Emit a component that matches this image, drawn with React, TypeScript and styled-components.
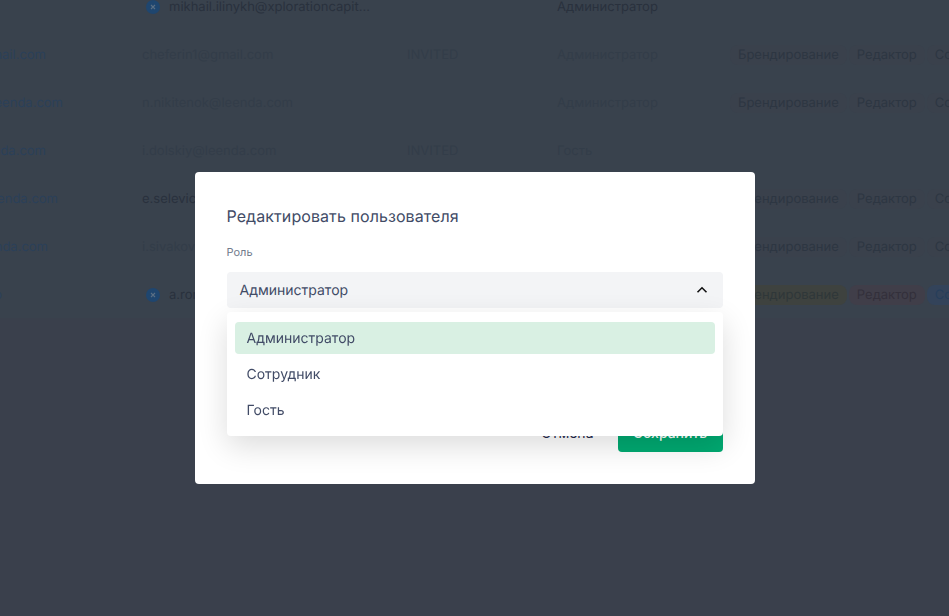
import React from "react";
import styled, { createGlobalStyle } from "styled-components";

type Tone = "dark" | "faint" | "link";

const users: {
  login: string;
  loginEnd: number;
  email: string;
  tone: Tone;
  badge?: boolean;
  status?: string;
  role: string;
  roleTone: Tone;
  tags?: boolean;
  bright?: boolean;
}[] = [
  { login: "", loginEnd: 0, email: "mikhail.ilinykh@xplorationcapit...", tone: "dark", badge: true, role: "Администратор", roleTone: "dark" },
  { login: "cheferin1@gmail.com", loginEnd: 46, email: "cheferin1@gmail.com", tone: "faint", status: "INVITED", role: "Администратор", roleTone: "faint", tags: true },
  { login: "n.nikitenok@leenda.com", loginEnd: 63, email: "n.nikitenok@leenda.com", tone: "faint", role: "Администратор", roleTone: "faint", tags: true },
  { login: "i.dolskiy@leenda.com", loginEnd: 46, email: "i.dolskiy@leenda.com", tone: "faint", status: "INVITED", role: "Гость", roleTone: "faint" },
  { login: "e.selevich@leenda.com", loginEnd: 58, email: "e.selevich@leenda.com", tone: "dark", role: "Администратор", roleTone: "faint", tags: true },
  { login: "i.sivakov@leenda.com", loginEnd: 48, email: "i.sivakov@leenda.com", tone: "faint", role: "Администратор", roleTone: "faint", tags: true },
  { login: "a.romanenko", loginEnd: 2, email: "a.romanenko@leenda.com", tone: "dark", badge: true, role: "Администратор", roleTone: "dark", tags: true, bright: true },
];

const toneColor: Record<Tone, string> = {
  dark: "#29313d",
  faint: "#333d49",
  link: "#2b4059",
};

const options = ["Администратор", "Сотрудник", "Гость"];

export default function App() {
  return (
    <Page>
      <GlobalStyle />
      <Table>
        {users.map((user) => (
          <Row key={user.email}>
            <Login $end={user.loginEnd}>
              <span>{user.login}</span>
            </Login>
            <EmailCell $tone={user.tone} $badge={user.badge}>
              {user.badge && (
                <Badge>
                  <svg width="6" height="6" viewBox="0 0 6 6">
                    <path d="M1 1l4 4M5 1L1 5" stroke="#5a6f84" strokeWidth="1.1" />
                  </svg>
                </Badge>
              )}
              {user.email}
            </EmailCell>
            <Cell $tone="faint">{user.status}</Cell>
            <Cell $tone={user.roleTone}>{user.role}</Cell>
            {user.tags && (
              <Tags>
                <Tag $bg={user.bright ? "#3e423f" : "#3a414c"} $color={user.bright ? "#2f3739" : "#2d3642"}>
                  Брендирование
                </Tag>
                <Tag $bg={user.bright ? "#403e49" : "#3a414c"} $color={user.bright ? "#33303b" : "#2d3642"}>
                  Редактор
                </Tag>
                <Tag $bg={user.bright ? "#33435a" : "#3a414c"} $color={user.bright ? "#263e5a" : "#2d3642"}>
                  Сотрудник
                </Tag>
              </Tags>
            )}
          </Row>
        ))}
      </Table>

      <Overlay>
        <Modal>
          <Title>Редактировать пользователя</Title>
          <Label>Роль</Label>
          <SelectBox>
            <Select>
              Администратор
              <svg width="12" height="8" viewBox="0 0 12 8" fill="none">
                <path d="M1.5 6.2L6 1.8l4.5 4.4" stroke="#111" strokeWidth="1.6" />
              </svg>
            </Select>
            <Menu>
              {options.map((option, i) => (
                <Option key={option} $active={i === 0}>
                  {option}
                </Option>
              ))}
            </Menu>
          </SelectBox>
          <Footer>
            <CancelButton>Отмена</CancelButton>
            <SaveButton>Сохранить</SaveButton>
          </Footer>
        </Modal>
      </Overlay>
    </Page>
  );
}

const GlobalStyle = createGlobalStyle`
  html, body {
    margin: 0;
    height: 100%;
    overflow: hidden;
    background: #3a404c;
  }
  * {
    box-sizing: border-box;
  }
`;

const Page = styled.div`
  position: relative;
  width: 949px;
  height: 616px;
  overflow: hidden;
  background: #3a404c;
  font-family: Inter, "Liberation Sans", sans-serif;
  font-size: 13px;
  text-rendering: geometricPrecision;
`;

const Table = styled.div`
  margin-top: -18px;
  background: #39424d;
`;

const Row = styled.div`
  display: grid;
  grid-template-columns: 142px 265px 150px 181px 1fr;
  align-items: center;
  height: 48px;
  padding-top: 2px;
  white-space: nowrap;
`;

const Login = styled.div<{ $end: number }>`
  display: flex;
  justify-content: flex-end;
  width: ${(p) => p.$end}px;
  overflow: hidden;
  color: ${toneColor.link};

  span {
    flex-shrink: 0;
  }
`;

const Cell = styled.div<{ $tone: Tone }>`
  color: ${(p) => toneColor[p.$tone]};
`;

const EmailCell = styled(Cell)<{ $badge?: boolean }>`
  display: flex;
  align-items: center;
  gap: 9px;
  padding-left: ${(p) => (p.$badge ? "4px" : "0")};
`;

const Badge = styled.span`
  display: flex;
  align-items: center;
  justify-content: center;
  width: 14px;
  height: 14px;
  margin-top: -1px;
  border-radius: 50%;
  background: #1f466f;
`;

const Tags = styled.div`
  display: flex;
  gap: 2px;
  margin-left: -8px;
`;

const Tag = styled.span<{ $bg: string; $color: string }>`
  padding: 0 8px;
  height: 20px;
  line-height: 20px;
  border-radius: 8px;
  flex-shrink: 0;
  background: ${(p) => p.$bg};
  color: ${(p) => p.$color};
`;

const Overlay = styled.div`
  position: absolute;
  inset: 0;
  display: flex;
  justify-content: center;
  align-items: center;
  padding-top: 40px;
  backdrop-filter: blur(0.7px);
`;

const Modal = styled.div`
  display: flex;
  flex-direction: column;
  width: 560px;
  height: 312px;
  padding: 32px;
  border-radius: 4px;
  background: #fff;
  color: #414b66;
  font-size: 14px;
`;

const Title = styled.h2`
  margin: 0;
  font-size: 16px;
  font-weight: 400;
  line-height: 24px;
  letter-spacing: 0.08px;
`;

const Label = styled.div`
  margin-top: 16px;
  font-size: 11px;
  line-height: 16px;
  color: #717b8c;
`;

const SelectBox = styled.div`
  position: relative;
  margin-top: 12px;
`;

const Select = styled.div`
  display: flex;
  align-items: center;
  justify-content: space-between;
  height: 36px;
  padding: 0 15px 0 13px;
  border-radius: 4px;
  background: #f3f4f6;
`;

const Menu = styled.div`
  position: absolute;
  z-index: 2;
  top: 40px;
  left: 0;
  right: 0;
  display: flex;
  flex-direction: column;
  gap: 4px;
  padding: 10px 8px;
  border-radius: 4px;
  background: #fff;
  box-shadow: 0 10px 30px rgba(0, 0, 0, 0.14);
`;

const Option = styled.div<{ $active: boolean }>`
  display: flex;
  align-items: center;
  height: 32px;
  padding: 0 12px;
  border-radius: 4px;
  background: ${(p) => (p.$active ? "#d9f0e3" : "transparent")};
`;

const Footer = styled.div`
  display: flex;
  justify-content: flex-end;
  align-items: center;
  gap: 24px;
  margin-top: auto;
`;

const CancelButton = styled.button`
  padding: 0;
  border: 0;
  background: none;
  font: inherit;
  color: #1f2a4d;
`;

const SaveButton = styled.button`
  width: 105px;
  height: 40px;
  border: 0;
  border-radius: 4px;
  background: #00a971;
  font: inherit;
  font-weight: 500;
  color: #fff;
`;
